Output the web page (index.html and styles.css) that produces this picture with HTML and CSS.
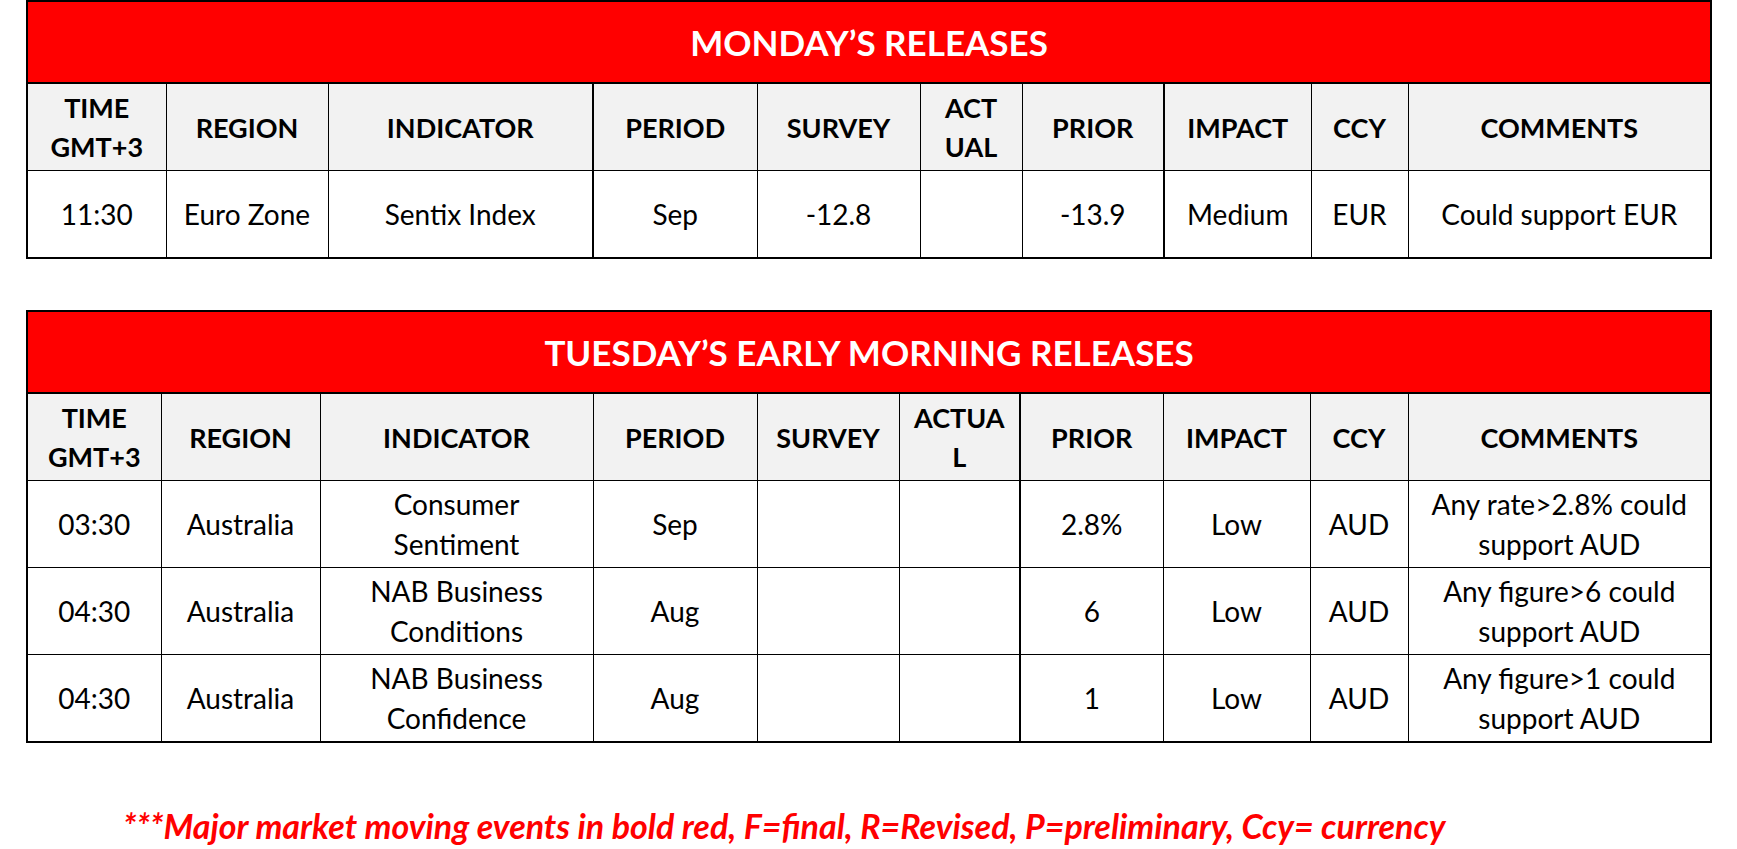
FILE: index.html
```html
<!DOCTYPE html>
<html>
<head>
<meta charset="utf-8">
<link rel="stylesheet" href="styles.css">
</head>
<body>
<div class="page">
  <table class="cal monday">
    <colgroup>
      <col style="width:139px"><col style="width:162px"><col style="width:265px"><col style="width:164px"><col style="width:163px"><col style="width:102px"><col style="width:142px"><col style="width:147px"><col style="width:97px"><col style="width:303px">
    </colgroup>
    <tr class="title"><td colspan="10">MONDAY’S RELEASES</td></tr>
    <tr class="head">
      <th>TIME<br>GMT+3</th><th>REGION</th><th class="thick-r">INDICATOR</th><th>PERIOD</th><th>SURVEY</th><th>ACT<br>UAL</th><th class="thick-r">PRIOR</th><th>IMPACT</th><th>CCY</th><th>COMMENTS</th>
    </tr>
    <tr class="row">
      <td>11:30</td><td>Euro Zone</td><td class="thick-r">Sentix Index</td><td>Sep</td><td>-12.8</td><td></td><td class="thick-r">-13.9</td><td>Medium</td><td>EUR</td><td>Could support EUR</td>
    </tr>
  </table>

  <table class="cal tuesday">
    <colgroup>
      <col style="width:134px"><col style="width:159px"><col style="width:273px"><col style="width:164px"><col style="width:142px"><col style="width:121px"><col style="width:143px"><col style="width:147px"><col style="width:98px"><col style="width:303px">
    </colgroup>
    <tr class="title"><td colspan="10">TUESDAY’S EARLY MORNING RELEASES</td></tr>
    <tr class="head">
      <th>TIME<br>GMT+3</th><th>REGION</th><th>INDICATOR</th><th>PERIOD</th><th>SURVEY</th><th class="thick-r">ACTUA<br>L</th><th>PRIOR</th><th>IMPACT</th><th>CCY</th><th>COMMENTS</th>
    </tr>
    <tr class="row">
      <td>03:30</td><td>Australia</td><td>Consumer<br>Sentiment</td><td>Sep</td><td></td><td class="thick-r"></td><td>2.8%</td><td>Low</td><td>AUD</td><td>Any rate&gt;2.8% could<br>support AUD</td>
    </tr>
    <tr class="row">
      <td>04:30</td><td>Australia</td><td>NAB Business<br>Conditions</td><td>Aug</td><td></td><td class="thick-r"></td><td>6</td><td>Low</td><td>AUD</td><td>Any figure&gt;6 could<br>support AUD</td>
    </tr>
    <tr class="row">
      <td>04:30</td><td>Australia</td><td>NAB Business<br>Confidence</td><td>Aug</td><td></td><td class="thick-r"></td><td>1</td><td>Low</td><td>AUD</td><td>Any figure&gt;1 could<br>support AUD</td>
    </tr>
  </table>

  <p class="note">***Major market moving events in bold red, F=final, R=Revised, P=preliminary, Ccy= currency</p>
</div>
</body>
</html>
```

FILE: styles.css
```css
html, body {
  margin: 0;
  padding: 0;
  background: #ffffff;
}

.page {
  padding: 0 0 0 26px;
  font-family: Lato, "Open Sans", sans-serif;
  color: #000;
}

.cal {
  border-collapse: collapse;
  table-layout: fixed;
  width: 1685px;
  border: 2px solid #000;
}

.cal td, .cal th {
  border: 1px solid #000;
  text-align: center;
  vertical-align: middle;
  padding: 0;
  overflow: hidden;
}

.cal .thick-r {
  border-right: 2px solid #000;
}

.title td {
  background: #ff0000;
  color: #ffffff;
  font-weight: 700;
  font-size: 35px;
  height: 80px;
  border-bottom: 2px solid #000;
}

.head th {
  background: #f2f2f2;
  font-weight: 700;
  font-size: 27px;
  line-height: 39px;
  height: 86px;
}

.row td {
  font-size: 28px;
  line-height: 40px;
  height: 86px;
  font-weight: 400;
}

.tuesday {
  margin-top: 51px;
}

.note {
  margin: 63px 0 0 97px;
  color: #ff0000;
  font-weight: 700;
  font-style: italic;
  font-size: 34px;
  line-height: 40px;
  white-space: nowrap;
}
```
